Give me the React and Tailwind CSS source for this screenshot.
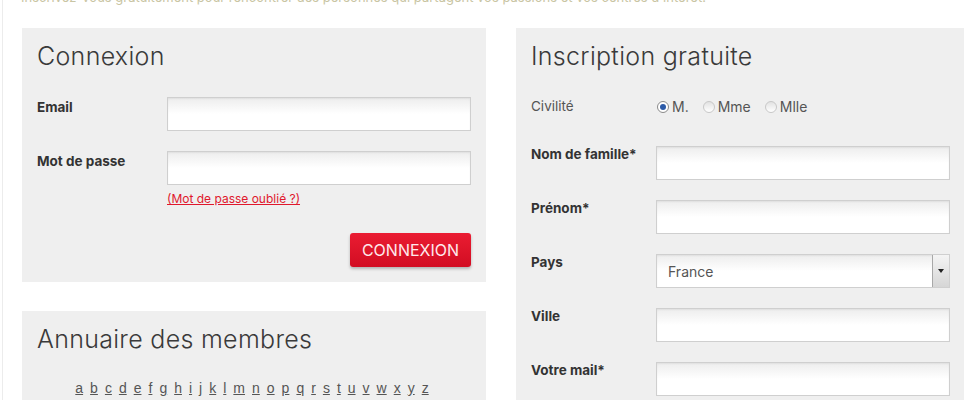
import React from "react";

const title = "text-[25px] font-light text-[#3a3a3a] leading-[30px] tracking-[0.3px]";
const label = "text-[13.5px] font-bold text-[#333] leading-[16px]";
const inputCls =
  "h-[34px] w-full border border-[#cfcfcf] bg-white bg-gradient-to-b from-[#ededed] via-white to-white shadow-[inset_0_1px_2px_rgba(0,0,0,0.06)]";

function Field({ text, labelW, children, mt, pt = "pt-[2px]" }) {
  return (
    <div className={`flex items-start ${mt}`}>
      <div className={`${labelW} shrink-0 ${pt} ${label}`}>{text}</div>
      <div className="flex-1">{children}</div>
    </div>
  );
}

function Radio({ checked, text }) {
  return (
    <div className="flex items-center gap-[3px]">
      <span
        className={`flex h-[12px] w-[12px] items-center justify-center rounded-full border ${
          checked ? "border-[#8a8a8a] bg-white" : "border-[#c8c8c8] bg-gradient-to-b from-[#e2e2e2] to-white"
        }`}
      >
        {checked && <span className="h-[6px] w-[6px] rounded-full bg-[#2b5aa8]" />}
      </span>
      <span className="text-[14px] text-[#555]">{text}</span>
    </div>
  );
}

export default function App() {
  const letters = "abcdefghijklmnopqrstuvwxyz".split("");
  return (
    <div
      className="h-[400px] w-[980px] overflow-hidden bg-white"
      style={{ fontFamily: "Inter, 'Open Sans', sans-serif" }}
    >
      <div className="ml-[2px] h-full border-l border-[#ececec]">
        <div className="h-[5px] overflow-hidden pl-[18px]">
          <div className="-mt-[11px] text-[13px] leading-[16px] text-[#c9c5a3]">
            Inscrivez-vous gratuitement pour rencontrer des personnes qui partagent vos passions et vos centres d'intérêt.
          </div>
        </div>
        <div className="mt-[23px] flex items-start gap-[30px] pl-[19px]">
          {/* Left column */}
          <div className="flex w-[464px] flex-col gap-[29px]">
            <div className="bg-[#efefef] px-[15px] pb-[15px] pt-[13px]">
              <div className={title}>Connexion</div>
              <Field text="Email" labelW="w-[130px]" mt="mt-[26px]">
                <div className={inputCls} />
              </Field>
              <Field text="Mot de passe" labelW="w-[130px]" mt="mt-[20px]">
                <div className={inputCls} />
                <div className="mt-[6px] text-[12px] leading-[15px] text-[#e0182d] underline">
                  (Mot de passe oublié ?)
                </div>
              </Field>
              <div className="mt-[27px] flex justify-end">
                <button className="h-[34px] w-[121px] rounded-[3px] bg-gradient-to-b from-[#ea1c32] to-[#d20c22] text-[16px] text-[#ffe9ec] shadow-[0_2px_3px_rgba(0,0,0,0.25)]">
                  CONNEXION
                </button>
              </div>
            </div>
            <div className="h-[120px] bg-[#efefef] px-[15px] pt-[13px]">
              <div className={title}>Annuaire des membres</div>
              <div
                className="mt-[24px] flex justify-center gap-[7px] pr-[4px] text-[14px] text-[#555]"
                style={{ fontFamily: "'Liberation Sans', Arial, sans-serif" }}
              >
                {letters.map((l) => (
                  <span key={l} className="underline">
                    {l}
                  </span>
                ))}
              </div>
            </div>
          </div>
          {/* Right column */}
          <div className="h-[400px] w-[448px] bg-[#efefef] px-[15px] pr-[14px] pt-[13px]">
            <div className={title}>Inscription gratuite</div>
            <div className="mt-[25px] flex items-center">
              <div className="w-[126px] text-[13.5px] text-[#555]">Civilité</div>
              <div className="flex items-center gap-[14px]">
                <Radio checked text="M." />
                <Radio text="Mme" />
                <Radio text="Mlle" />
              </div>
            </div>
            <Field text="Nom de famille*" labelW="w-[125px]" mt="mt-[29px]" pt="pt-0">
              <div className={inputCls} />
            </Field>
            <Field text="Prénom*" labelW="w-[125px]" mt="mt-[20px]" pt="pt-0">
              <div className={inputCls} />
            </Field>
            <Field text="Pays" labelW="w-[125px]" mt="mt-[20px]" pt="pt-0">
              <div className={`${inputCls} flex items-center justify-between`}>
                <span className="pl-[11px] text-[14px] text-[#555]">France</span>
                <span className="flex h-full w-[17px] items-center justify-center border-l border-[#a8a8a8] bg-gradient-to-b from-[#f4f4f4] to-[#d6d6d6]">
                  <span className="h-0 w-0 border-x-[3px] border-t-[4px] border-x-transparent border-t-[#222]" />
                </span>
              </div>
            </Field>
            <Field text="Ville" labelW="w-[125px]" mt="mt-[20px]" pt="pt-0">
              <div className={inputCls} />
            </Field>
            <Field text="Votre mail*" labelW="w-[125px]" mt="mt-[20px]" pt="pt-0">
              <div className={inputCls} />
            </Field>
          </div>
        </div>
      </div>
    </div>
  );
}
